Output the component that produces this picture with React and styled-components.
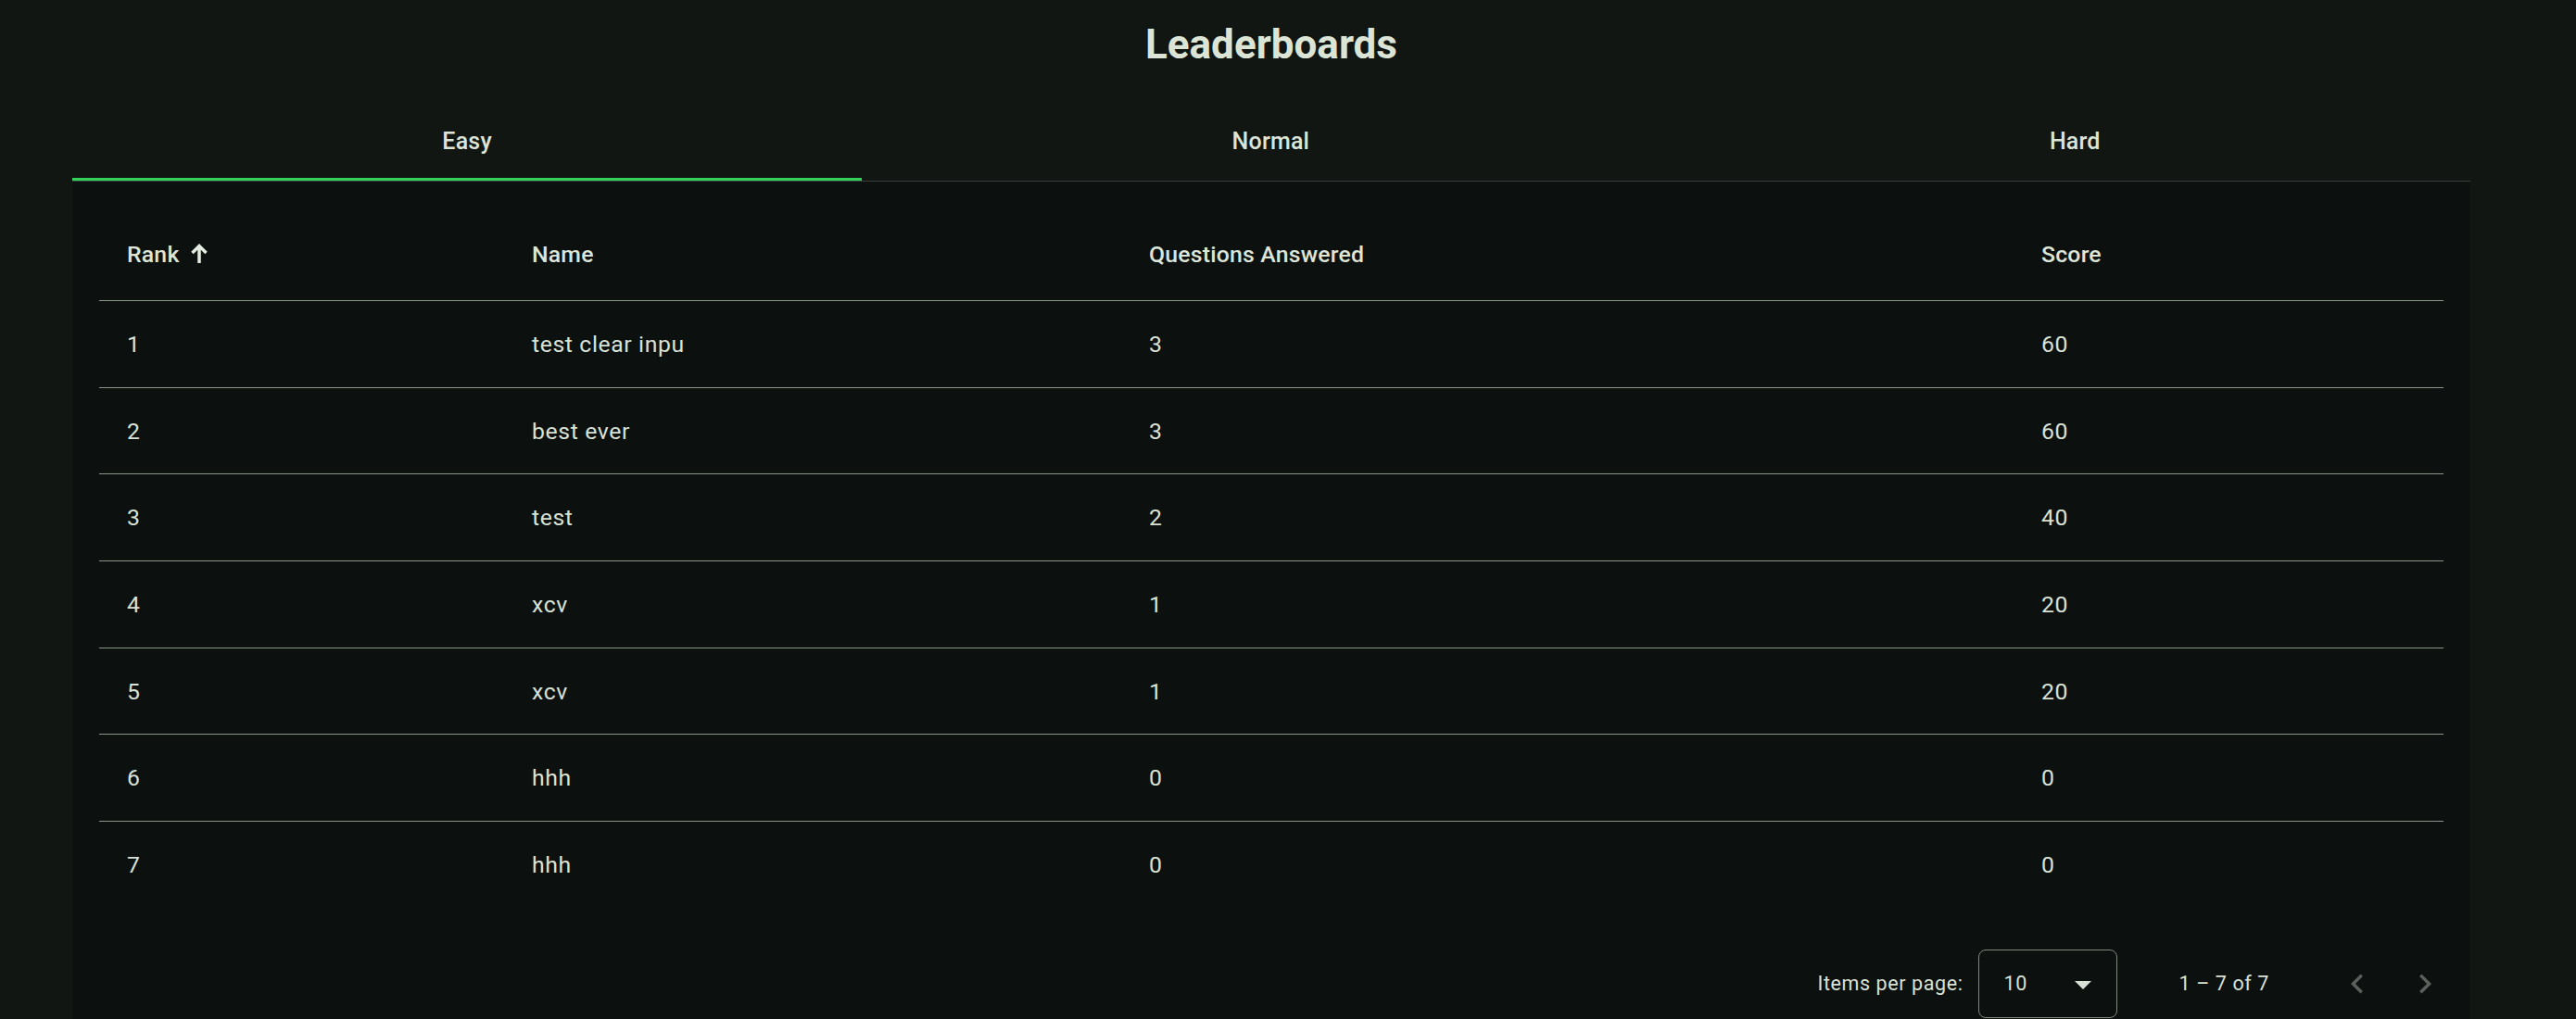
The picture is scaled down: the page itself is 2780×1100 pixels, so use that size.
import React, { useState } from "react";
import styled, { createGlobalStyle } from "styled-components";

const GlobalStyle = createGlobalStyle`
  body {
    margin: 0;
    background: #111613;
    font-family: Roboto, "Liberation Sans", sans-serif;
    color: #dce4d8;
  }
`;

const rows = [
  { rank: 1, name: "test clear inpu", answered: 3, score: 60 },
  { rank: 2, name: "best ever", answered: 3, score: 60 },
  { rank: 3, name: "test", answered: 2, score: 40 },
  { rank: 4, name: "xcv", answered: 1, score: 20 },
  { rank: 5, name: "xcv", answered: 1, score: 20 },
  { rank: 6, name: "hhh", answered: 0, score: 0 },
  { rank: 7, name: "hhh", answered: 0, score: 0 },
];

const tabs = ["Easy", "Normal", "Hard"];

function SortArrow() {
  return (
    <svg width="18" height="21" viewBox="0 0 10 12" fill="currentColor">
      <path d="M5 0 L10 5 L8.6 6.4 L6 3.8 V12 H4 V3.8 L1.4 6.4 L0 5 Z" />
    </svg>
  );
}

function Chevron({ dir }) {
  const d =
    dir === "left"
      ? "M15.41 7.41 14 6l-6 6 6 6 1.41-1.41L10.83 12z"
      : "M10 6 8.59 7.41 13.17 12l-4.58 4.59L10 18l6-6z";
  return (
    <svg width="42" height="42" viewBox="0 0 24 24" fill="currentColor">
      <path d={d} />
    </svg>
  );
}

function App() {
  const [active, setActive] = useState(0);

  return (
    <Page>
      <GlobalStyle />
      <Title>Leaderboards</Title>
      <TabBar>
        {tabs.map((t, i) => (
          <Tab key={t} $active={i === active} onClick={() => setActive(i)}>
            {t}
          </Tab>
        ))}
      </TabBar>
      <Card>
        <Row $head>
          <HeadCell>
            Rank
            <SortIcon>
              <SortArrow />
            </SortIcon>
          </HeadCell>
          <HeadCell>Name</HeadCell>
          <HeadCell>Questions Answered</HeadCell>
          <HeadCell>Score</HeadCell>
        </Row>
        {rows.map((r) => (
          <Row key={r.rank}>
            <Cell>{r.rank}</Cell>
            <Cell>{r.name}</Cell>
            <Cell>{r.answered}</Cell>
            <Cell>{r.score}</Cell>
          </Row>
        ))}
        <Paginator>
          <PageLabel>Items per page:</PageLabel>
          <SizeSelect>
            <span>10</span>
            <Caret />
          </SizeSelect>
          <RangeLabel>1 – 7 of 7</RangeLabel>
          <NavButtons>
            <IconButton disabled>
              <Chevron dir="left" />
            </IconButton>
            <IconButton disabled>
              <Chevron dir="right" />
            </IconButton>
          </NavButtons>
        </Paginator>
      </Card>
    </Page>
  );
}

const Page = styled.div`
  padding: 26px 114px 0 78px;
  min-height: 1100px;
  box-sizing: border-box;
`;

const Title = styled.h1`
  margin: 0 0 40px;
  text-align: center;
  font-size: 44px;
  line-height: 44px;
  font-weight: 700;
  color: #dbe4d5;
`;

const TabBar = styled.div`
  display: flex;
  border-bottom: 1px solid #3a403c;
`;

const Tab = styled.div`
  position: relative;
  flex: 1 1 auto;
  height: 85px;
  padding: 0 42px;
  display: flex;
  align-items: center;
  justify-content: center;
  font-size: 25px;
  font-weight: 500;
  letter-spacing: 0.2px;
  color: #dce4d8;
  cursor: pointer;

  &::after {
    content: "";
    position: absolute;
    left: 0;
    right: 0;
    bottom: 0;
    height: 3px;
    background: ${(p) => (p.$active ? "#32d15b" : "transparent")};
  }
`;

const Card = styled.div`
  background: #0c100e;
  padding: 29px 29px 0;
  min-height: 910px;
  box-sizing: border-box;
`;

const Row = styled.div`
  display: grid;
  grid-template-columns: 437px 666px 963px 1fr;
  align-items: center;
  height: ${(p) => (p.$head ? "100px" : "93.7px")};
  box-sizing: border-box;
  border-bottom: 1px solid #8a9487;

  &:nth-last-child(2) {
    border-bottom: none;
  }
`;

const HeadCell = styled.div`
  display: flex;
  align-items: center;
  padding-left: 30px;
  font-size: 24.8px;
  font-weight: 500;
  letter-spacing: 0.2px;
  color: #dde5d9;
`;

const SortIcon = styled.span`
  display: inline-flex;
  margin-left: 12px;
  margin-top: -2px;
  color: #e4ebe0;
`;

const Cell = styled.div`
  padding-left: 30px;
  font-size: 24.8px;
  font-weight: 400;
  letter-spacing: 0.6px;
  color: #d9e1d5;
`;

const Paginator = styled.div`
  display: flex;
  align-items: center;
  justify-content: flex-end;
  height: 162px;
  margin-right: -15px;
  font-size: 21.5px;
  letter-spacing: 0.6px;
  color: #d9e1d5;
`;

const PageLabel = styled.span`
  margin-right: 16px;
`;

const SizeSelect = styled.div`
  width: 150px;
  height: 74px;
  box-sizing: border-box;
  border: 1.5px solid #7f897c;
  border-radius: 8px;
  display: flex;
  align-items: center;
  justify-content: space-between;
  padding: 0 27px;
  font-size: 21.5px;
`;

const Caret = styled.span`
  width: 0;
  height: 0;
  border-left: 9px solid transparent;
  border-right: 9px solid transparent;
  border-top: 9px solid #d9e1d5;
  margin-top: 4px;
`;

const RangeLabel = styled.span`
  margin-left: 67px;
  margin-right: 59px;
`;

const NavButtons = styled.div`
  display: flex;
  gap: 2px;
`;

const IconButton = styled.button`
  width: 71px;
  height: 71px;
  border: none;
  background: transparent;
  color: #5a605b;
  display: flex;
  align-items: center;
  justify-content: center;
  padding: 0;
`;

export default App;
